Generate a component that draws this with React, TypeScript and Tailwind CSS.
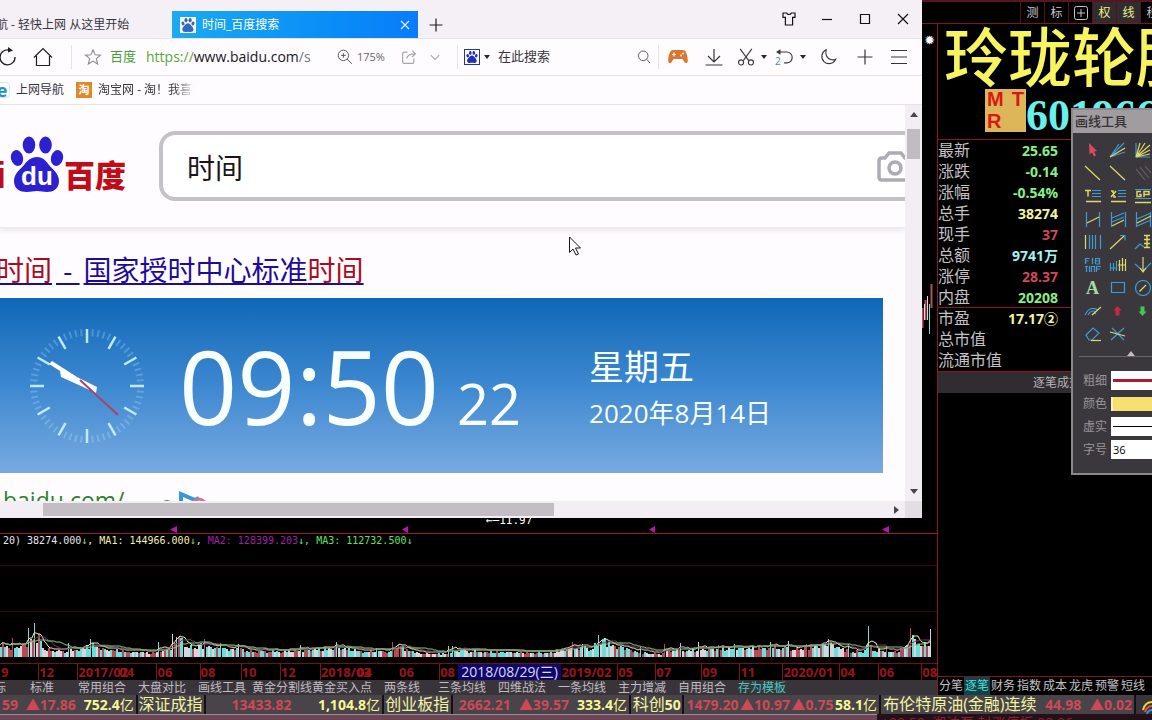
import type { ReactNode } from 'react';

const UI = "font-['Open_Sans','Noto_Sans_CJK_SC',sans-serif]";
const MONO = "font-['DejaVu_Sans_Mono','Noto_Sans_CJK_SC',monospace]";

const QUOTES = [
  { label: '最新', value: '25.65', color: 'text-[#86f086]' },
  { label: '涨跌', value: '-0.14', color: 'text-[#86f086]' },
  { label: '涨幅', value: '-0.54%', color: 'text-[#86f086]' },
  { label: '总手', value: '38274', color: 'text-[#f4f4a0]' },
  { label: '现手', value: '37', color: 'text-[#d04858]' },
  { label: '总额', value: '9741万', color: 'text-[#a0f4f4]' },
  { label: '涨停', value: '28.37', color: 'text-[#d04858]' },
  { label: '内盘', value: '20208', color: 'text-[#86f086]' },
];

const VALUATION = [
  { label: '市盈', value: '17.17②' },
  { label: '总市值', value: '' },
  { label: '流通市值', value: '' },
];

const TEMPLATES = [
  '标准', '常用组合', '大盘对比', '画线工具', '黄金分割线', '黄金买入点', '两条线',
  '三条均线', '四维战法', '一条均线', '主力增减', '自用组合',
];

const SIDE_TABS = ['分笔', '逐笔', '财务', '指数', '成本', '龙虎', '预警', '短线'];

const AXIS = [
  { label: '9', w: 38, tick: false },
  { label: '12', w: 39, tick: true },
  { label: '2017/02', w: 41, tick: true },
  { label: '04', w: 38, tick: false },
  { label: '06', w: 43, tick: true },
  { label: '08', w: 41, tick: true },
  { label: '10', w: 39, tick: true },
  { label: '12', w: 40, tick: true },
  { label: '2018/03', w: 36, tick: true },
  { label: '04', w: 42, tick: false },
  { label: '06', w: 41, tick: false },
  { label: '08', w: 123, tick: true },
  { label: '2019/02', w: 57, tick: true },
  { label: '05', w: 38, tick: true },
  { label: '07', w: 46, tick: true },
  { label: '09', w: 38, tick: true },
  { label: '11', w: 43, tick: true },
  { label: '2020/01', w: 57, tick: true },
  { label: '04', w: 39, tick: true },
  { label: '06', w: 43, tick: true },
  { label: '08', w: 15, tick: true },
];

// x position and typical height of the volume bars around it
const ENVELOPE: [number, number][] = [
  [0, 13], [12, 7], [26, 12], [33, 20], [38, 17], [44, 8], [60, 5], [72, 6], [92, 11], [105, 7],
  [125, 5], [150, 4], [170, 8], [173, 17], [182, 14], [190, 10], [205, 11], [215, 8], [240, 7],
  [260, 5], [300, 6], [330, 8], [345, 8], [365, 5], [385, 5], [398, 10], [406, 7], [420, 3],
  [445, 3], [454, 7], [468, 5], [530, 4], [550, 4], [571, 9], [590, 8], [599, 16], [615, 10],
  [640, 4], [660, 3], [672, 6], [700, 7], [740, 8], [770, 9], [790, 8], [830, 12], [850, 5],
  [864, 6], [868, 13], [873, 6], [895, 5], [905, 10], [912, 19], [920, 10], [932, 15],
];

const PEAKS: Record<number, number> = {
  12: 19, 28: 29, 34: 34, 68: 14, 90: 18, 158: 15, 172: 23, 176: 20, 182: 19, 204: 18, 220: 14,
  238: 13, 300: 12, 336: 15, 376: 9, 392: 15, 398: 12, 448: 11, 452: 11, 572: 15, 582: 13,
  598: 22, 640: 10, 664: 13, 680: 14, 698: 15, 718: 12, 734: 13, 770: 15, 788: 16, 806: 13,
  828: 18, 848: 13, 868: 31, 886: 11, 910: 29, 930: 28,
};

function heightAt(x: number) {
  const i = ENVELOPE.findIndex(([ex]) => ex >= x);
  if (i <= 0) return ENVELOPE[0][1];
  const [x0, h0] = ENVELOPE[i - 1];
  const [x1, h1] = ENVELOPE[i];
  return h0 + ((h1 - h0) * (x - x0)) / (x1 - x0);
}

const BARS = Array.from({ length: 466 }, (_, i) => {
  const x = i * 2;
  const noise = ((i * 7919 + 37 * i * i) % 101) / 101;
  const tint = (i * 31 + ((i * i) % 17) * 5 + Math.floor(i / 9) * 3) % 10;
  const fill = tint < 4 ? '#66e0dc' : tint < 7 ? '#b84a58' : '#dcd4d8';
  const h = PEAKS[x] ?? heightAt(x) * (0.75 + noise * 0.6);
  return { x, h: Math.round(h), fill };
});

function average(span: number) {
  return BARS.map((bar, i) => {
    const part = BARS.slice(Math.max(0, i - span + 1), i + 1);
    const mean = part.reduce((sum, b) => sum + b.h, 0) / part.length;
    return `${bar.x},${Math.round(108 - mean)}`;
  }).join(' ');
}

function VolumeChart() {
  return (
    <svg viewBox="0 0 937 116" preserveAspectRatio="none" className="h-[116px] w-full shrink-0" aria-hidden="true">
      <path d="M0 18.5H937M0 64.5H937" stroke="#3c0610" />
      {BARS.map((bar) => (
        <rect
          key={bar.x}
          x={bar.x}
          y={110 - bar.h}
          width={PEAKS[bar.x] ? 1 : 2}
          height={bar.h}
          fill={bar.fill}
          stroke="none"
        />
      ))}
      <polyline points={average(5)} fill="none" stroke="#f0f0b0" strokeWidth="1" />
      <polyline points={average(10)} fill="none" stroke="#8c2a7c" strokeWidth="1" />
      <polyline points={average(18)} fill="none" stroke="#78d878" strokeWidth="1" />
    </svg>
  );
}

function Paw({ className, fill }: { className: string; fill: string }) {
  return (
    <svg viewBox="0 0 54 56" className={className} fill={fill} aria-hidden="true">
      <ellipse cx="19" cy="9" rx="6.3" ry="8.6" />
      <ellipse cx="35.5" cy="9" rx="6.3" ry="8.6" />
      <ellipse cx="7" cy="22" rx="6" ry="8" transform="rotate(-14 7 22)" />
      <ellipse cx="47" cy="22" rx="6" ry="8" transform="rotate(14 47 22)" />
      <path d="M27 21c6 0 9 4 12 8s10 8 10 16-6 11-12 11c-4 0-6-1-10-1s-6 1-10 1C10 56 4 53 4 45s7-12 10-16 7-8 13-8Z" />
    </svg>
  );
}

function Icon({ children, className = 'size-5 text-[#38343c]' }: { children: ReactNode; className?: string }) {
  return (
    <svg viewBox="0 0 20 20" className={`shrink-0 ${className}`} fill="none" stroke="currentColor" strokeWidth="1.2" aria-hidden="true">
      {children}
    </svg>
  );
}

function Caret() {
  return (
    <svg viewBox="0 0 6 4" className="h-1 w-1.5 shrink-0" fill="#28242c" aria-hidden="true">
      <path d="M0 0h6L3 4Z" />
    </svg>
  );
}

function TabStrip() {
  return (
    <div className="flex h-[39px] shrink-0 items-end border-b border-[#e6e2ea] bg-[#f4f0f6] text-xs text-[#38343c]">
      <button type="button" className="flex h-[27px] w-[172px] shrink-0 items-center overflow-hidden whitespace-nowrap">
        <span className="-ml-1">航 - 轻快上网 从这里开始</span>
      </button>
      <div className="flex h-[27px] w-[246px] shrink-0 items-center bg-linear-to-r from-[#1caaf0] to-[#0a7cfa] px-2 text-white">
        <span className="flex size-4 items-center justify-center bg-white">
          <Paw className="size-3.5" fill="#3468c0" />
        </span>
        <span className="ml-1.5 flex-1">时间_百度搜索</span>
        <button type="button" aria-label="关闭标签">
          <svg viewBox="0 0 10 10" className="size-2.5" stroke="#d8f0ff" strokeWidth="1.2" aria-hidden="true">
            <path d="M1 1l8 8M9 1l-8 8" />
          </svg>
        </button>
      </div>
      <button type="button" aria-label="新标签" className="flex h-[27px] w-9 items-center justify-center text-[#201c24]">
        <Icon className="size-5">
          <path d="M10 3.5v13M3.5 10h13" />
        </Icon>
      </button>
      <div className="ml-auto flex h-[38px] items-center text-[#141018]">
        <button type="button" aria-label="皮肤" className="flex w-[38px] justify-center">
          <Icon className="size-4">
            <path d="M2.500 2.500h4.500c1 2.500 5 2.500 6 0h4.500v5.500h-3v9.500h-9v-9.500h-3Z" strokeWidth="1.5" />
          </Icon>
        </button>
        <button type="button" aria-label="最小化" className="flex w-[38px] justify-center">
          <Icon className="size-5">
            <path d="M5 10.5h10" />
          </Icon>
        </button>
        <button type="button" aria-label="最大化" className="flex w-[38px] justify-center">
          <Icon className="size-5">
            <path d="M5.5 5.5h9v9h-9Z" />
          </Icon>
        </button>
        <button type="button" aria-label="关闭" className="flex w-[38px] justify-center">
          <Icon className="size-5">
            <path d="M5 5l10 10M15 5L5 15" />
          </Icon>
        </button>
      </div>
    </div>
  );
}

function AddressBar() {
  return (
    <div className="flex h-[37px] shrink-0 items-center border-b border-[#e6e2ea] text-[#38343c]">
      <button type="button" aria-label="刷新" className="w-[33px] shrink-0">
        <Icon className="-ml-0.5 size-5 text-[#201c24]">
          <path d="M17 10a7.5 7.5 0 1 1-6-7" strokeWidth="1.4" />
          <path d="M10 0l5 3.5-5 2Z" fill="currentColor" stroke="none" />
        </Icon>
      </button>
      <button type="button" aria-label="主页" className="w-[38px] shrink-0">
        <Icon className="size-5 text-[#201c24]">
          <path d="M1 10.5L10 1.5l9 9M3.5 9v9.500h13V9" />
        </Icon>
      </button>
      <div className="flex h-6 min-w-0 flex-1 items-center border-l border-[#e6e2ea] pl-3">
        <button type="button" aria-label="收藏">
          <Icon className="size-[18px] text-[#8c8890]">
            <path d="M10 2l2.300 5.600 6 .4-4.600 3.900 1.500 5.900L10 14.600l-5.200 3.200 1.500-5.900L1.700 8l6-.4Z" />
          </Icon>
        </button>
        <span className="ml-2 shrink-0 text-[13px] text-[#48a038]">百度</span>
        <a href="https://www.baidu.com/s" className="ml-2.5 min-w-0 flex-1 truncate text-sm text-[#18141c]">
          <span className="text-[#58a838]">https://</span>www.baidu.com<span className="text-[#78747c]">/s</span>
        </a>
        <Icon className="size-4 text-[#58545c]">
          <path d="M8 1.5a6.5 6.5 0 1 1 0 13a6.5 6.5 0 0 1 0-13ZM12.5 12.5l6 6M8 5v6M5 8h6" />
        </Icon>
        <span className="ml-1 w-[30px] shrink-0 text-[11px] text-[#68646c]">175%</span>
        <button type="button" aria-label="分享" className="ml-3.5">
          <Icon className="size-4 text-[#a8a4ac]">
            <path d="M8 4H4Q2 4 2 6v10q0 2 2 2h10q2 0 2-2v-4M7 12q1-6 11-6M14 2l4 4-4 4" strokeWidth="1.5" />
          </Icon>
        </button>
        <button type="button" aria-label="更多网址" className="mr-4 ml-3">
          <Icon className="size-3 text-[#a8a4ac]">
            <path d="M3 7l7 7 7-7" strokeWidth="1.8" />
          </Icon>
        </button>
      </div>
      <div className="flex h-6 w-[201px] shrink-0 items-center border-l border-[#e6e2ea] px-1.5">
        <span className="flex size-4 shrink-0 items-center justify-center border border-[#283880]">
          <Paw className="size-3" fill="#2030b8" />
        </span>
        <span className="ml-1 shrink-0">
          <Caret />
        </span>
        <input
          type="text"
          aria-label="搜索"
          placeholder="在此搜索"
          className="ml-2 min-w-0 flex-1 bg-transparent text-[13px] placeholder:text-[#38343c] focus:outline-none"
        />
        <button type="button" aria-label="开始搜索">
          <Icon className="size-4 text-[#58545c]">
            <path d="M9 2.5a6 6 0 1 1 0 12a6 6 0 0 1 0-12ZM13.5 13l4 4.5" />
          </Icon>
        </button>
      </div>
      <div className="flex h-6 shrink-0 items-center border-l border-[#e6e2ea] pr-[3px]">
        <button type="button" aria-label="游戏" className="flex w-[37px] justify-center">
          <svg viewBox="0 0 20 16" className="h-4 w-5" aria-hidden="true">
            <path d="M5 1h10c3 0 4.500 5 4.800 10 .2 4-2.300 4-3.800 1.500L14.500 10h-9L4 12.500C2.500 15 0 15 .2 11 .5 6 2 1 5 1Z" fill="#d87830" />
            <path d="M6 3.5v4M4 5.5h4" stroke="#fff0e0" strokeWidth="1.2" />
            <circle cx="13" cy="6.5" r="1" fill="#fff0e0" />
            <circle cx="15" cy="4.5" r="1" fill="#fff0e0" />
          </svg>
        </button>
        <button type="button" aria-label="下载" className="flex w-9 justify-center">
          <Icon className="size-5">
            <path d="M10 2v13M4 9l6 6 6-6M1.5 18h17" />
          </Icon>
        </button>
        <button type="button" aria-label="截图" className="flex w-[39px] items-center justify-center gap-1.5">
          <Icon className="size-[18px]">
            <path d="M3.5 1l9.500 13M16.500 1L7 14" />
            <circle cx="4.5" cy="16" r="2.8" />
            <circle cx="15.5" cy="16" r="2.8" />
          </Icon>
          <Caret />
        </button>
        <button type="button" aria-label="撤销" className="relative flex w-[39px] items-center justify-center gap-1.5">
          <Icon className="size-[18px]">
            <path d="M2 4.5h10a6 6 0 0 1 0 12h-3" />
            <path d="M0 4.5L5 1.5v6Z" fill="currentColor" stroke="none" />
          </Icon>
          <span className="absolute top-1.5 left-1 text-[10px] text-[#4888b8]">2</span>
          <Caret />
        </button>
        <button type="button" aria-label="夜间模式" className="flex w-9 justify-center">
          <Icon className="size-[18px]">
            <path d="M8 2a8 8 0 1 0 10.500 10.500q-1.500 1-4.500 .5C8.500 12 6.500 6.500 8 2Z" />
          </Icon>
        </button>
        <button type="button" aria-label="添加" className="flex w-[37px] justify-center">
          <Icon className="size-5">
            <path d="M10 2.500v15M2.500 10h15" />
          </Icon>
        </button>
        <button type="button" aria-label="菜单" className="flex w-9 justify-center pr-1">
          <Icon className="size-5">
            <path d="M2 3.5h16M2 10h16M2 16.5h16" />
          </Icon>
        </button>
      </div>
    </div>
  );
}

function Bookmarks() {
  return (
    <nav className="flex h-[29px] shrink-0 items-center overflow-hidden border-b border-[#e6e2ea] text-xs text-[#38343c]">
      <a href="#nav" className="flex items-center gap-1.5">
        <span className="-ml-1.5 flex size-4 items-center justify-center rounded-sm border border-[#d8e8f4] text-lg leading-4 font-bold text-[#2090c8]">
          e
        </span>
        上网导航
      </a>
      <a href="#taobao" className="ml-3 flex items-center gap-1.5">
        <span className="flex size-4 items-center justify-center bg-[#e08828] text-[11px] font-bold text-white">淘</span>
        <span className="w-24 overflow-hidden mask-r-from-80% mask-r-to-100% whitespace-nowrap">淘宝网 - 淘！我喜欢</span>
      </a>
    </nav>
  );
}

function ClockFace() {
  return (
    <svg viewBox="0 0 116 116" className="size-[116px] shrink-0" aria-hidden="true">
      {Array.from({ length: 60 }, (_, i) => (
        <path
          key={i}
          d={i % 5 === 0 ? 'M58 1v14' : 'M58 1v7'}
          stroke="#c8f0ff"
          strokeWidth={i % 5 === 0 ? 2.5 : 2}
          strokeOpacity={i % 5 === 0 ? 0.95 : 0.25}
          transform={`rotate(${i * 6} 58 58)`}
        />
      ))}
      <path d="M20 36L23 33L48 49L68 59L67 65L52 58L32 49L31 43Z" fill="#fff" />
      <path d="M51 52L89 87" stroke="#a84468" strokeWidth="2" />
    </svg>
  );
}

function SearchPage() {
  return (
    <div className="min-w-0 flex-1 overflow-hidden bg-[#fefcff]">
      <div className="flex h-[123px] items-center overflow-hidden border-b border-[#eeeaf0] shadow-[0_2px_6px_#e8e4ea]">
        <div className="flex w-[159px] shrink-0 items-end pb-1 text-[#c00c18]">
          <span className="-ml-1 w-3.5 font-['Liberation_Sans'] text-[36px] leading-8 font-bold">i</span>
          <span className="relative">
            <Paw className="h-14 w-[54px]" fill="#2c20d0" />
            <span className="absolute inset-x-0 bottom-0.5 text-center font-['Liberation_Sans'] text-[26px] leading-7 font-bold text-white">
              du
            </span>
          </span>
          <span className="font-['Noto_Sans_CJK_SC',sans-serif] text-[31px] leading-9 font-black">百度</span>
        </div>
        <div className="-mr-10 flex h-[70px] min-w-0 flex-1 items-center rounded-2xl border-4 border-[#c4c2c6] bg-white pr-7 pl-6">
          <input
            type="text"
            aria-label="搜索内容"
            defaultValue="时间"
            className="min-w-0 flex-1 bg-transparent pt-1 text-[28px] leading-10 text-[#18141c] focus:outline-none"
          />
          <svg viewBox="0 0 36 32" className="h-8 w-9 shrink-0" fill="none" stroke="#aeacb2" strokeWidth="3.5" aria-hidden="true">
            <path d="M12 3h12l4 5h3q3 0 3 3v16q0 3-3 3H5q-3 0-3-3V11q0-3 3-3h3Z" />
            <circle cx="18" cy="18" r="6" />
          </svg>
        </div>
      </div>
      <a href="#time" className="mt-[22px] -ml-1 block text-[28px] leading-10 whitespace-nowrap text-[#1c0c98] underline decoration-2 underline-offset-2">
        <span className="text-[#a80c20]">时间</span>
        <span className="px-1"> - </span>国家授时中心标准<span className="text-[#a80c20]">时间</span>
      </a>
      <div className="mt-2 mr-[22px] flex h-[175px] items-center bg-linear-to-b from-[#0c68b8] via-[#3c88d0] to-[#78aae0] pl-[29px] text-[#f8ffff]">
        <ClockFace />
        <div className="flex shrink-0 items-baseline pl-[34px] font-medium">
          <span className="w-[264px] text-[102px] leading-[120px]">09:50</span>
          <span className="ml-3.5 text-[56px] leading-[60px]">22</span>
        </div>
        <div className="ml-[68px] pt-2 whitespace-nowrap">
          <p className="text-[35px] leading-[46px]">星期五</p>
          <p className="text-[26px] leading-[46px]">2020年8月14日</p>
        </div>
      </div>
      <div className="flex pt-2.5 pl-[3px] text-[23px] text-[#2c8428]">
        baidu.com/
        <svg viewBox="0 0 70 24" className="ml-4 h-6 w-[70px]" fill="none" aria-hidden="true">
          <path d="M0 19h11M23 19q4-2 8 0" stroke="#484448" strokeWidth="1.5" />
          <path d="M41 24V11l14 6 4-2" stroke="#3898d8" strokeWidth="4" />
          <path d="M53 19q6-6 12 0" stroke="#c87890" strokeWidth="3" />
        </svg>
      </div>
    </div>
  );
}

function BrowserWindow() {
  return (
    <section className="absolute top-0 right-[230px] bottom-[202px] left-0 flex flex-col overflow-hidden bg-[#fefcff]">
      <TabStrip />
      <AddressBar />
      <Bookmarks />
      <div className="flex min-h-0 flex-1">
        <SearchPage />
        <div className="flex w-[17px] shrink-0 flex-col items-center bg-[#f2eef4] pt-[7px] pb-[7px]">
          <svg viewBox="0 0 8 5" className="h-[5px] w-2" fill="#48444c" aria-hidden="true">
            <path d="M0 5L4 0l4 5Z" />
          </svg>
          <div className="mt-3 h-[30px] w-[13px] bg-[#c0bcc2]" />
          <svg viewBox="0 0 8 5" className="mt-auto h-[5px] w-2" fill="#48444c" aria-hidden="true">
            <path d="M0 0h8L4 5Z" />
          </svg>
        </div>
      </div>
      <div className="flex h-[17px] shrink-0 items-center bg-[#f2eef4]">
        <div className="ml-[43px] h-[13px] w-[511px] bg-[#c2bec4]" />
        <svg viewBox="0 0 5 8" className="mr-1.5 ml-auto h-2 w-[5px]" fill="#48444c" aria-hidden="true">
          <path d="M0 0l5 4-5 4Z" />
        </svg>
        <div className="h-full w-[17px] bg-[#e2dee4]" />
      </div>
      <svg viewBox="0 0 13 20" className="absolute top-[236px] left-[569px] h-5 w-[13px]" fill="#fff" stroke="#18141c" aria-hidden="true">
        <path d="M.5 1v15.500l3.500-3.500 3 6 2.500-1-3-6h5Z" />
      </svg>
    </section>
  );
}

const B = '#3c9cd4';
const Y = '#e0d868';

const TOOLS: { name: string; art: ReactNode }[] = [
  { name: '选择', art: <path d="M5 1l8 8-3 .5 2 4-2 1-2-4-2.500 2Z" fill="#e04860" /> },
  { name: '射线', art: (<><path d="M1 15L10 2M1 15L15 1M1 15l15-5" stroke={B} /><path d="M1 15l15-9" stroke={Y} /></>) },
  { name: '扇形', art: (<><path d="M2 1v14h14" stroke={B} /><path d="M2 15L6 1M2 15L11 1M2 15L16 3M2 15l14-7M2 15l14-3" stroke={Y} /></>) },
  { name: '线段', art: <path d="M1 1l15 14" stroke={Y} /> },
  { name: '直线', art: <path d="M1 1l15 14" stroke={Y} /> },
  { name: '平行线', art: <path d="M2 4l9 11M6 2l9 11M11 1l6 7" stroke="#5c585c" /> },
  { name: '文本线', art: (<><path d="M8 2.500h9M8 5.500h9M8 8.500h9" stroke={B} /><path d="M1 2.500h6M4 2.500v6M2 13.500h15" stroke={Y} strokeWidth="1.5" /></>) },
  { name: '百分比线', art: (<><path d="M9 2.500h8M9 5.500h8M9 8.500h8" stroke={B} /><path d="M2 9l5-6M2 3h2v2M7 9h-2v-2M2 13.500h15" stroke={Y} strokeWidth="1.5" /></>) },
  { name: 'GP', art: (<><path d="M1 1.500h16M1 10.500h16" stroke={B} /><path d="M7 3.500H3v5h4v-2H5M10 9V3.500h5v3h-5M1 14.500h16" stroke={Y} strokeWidth="1.5" /></>) },
  { name: '趋势', art: (<><path d="M2.500 1v15M15.500 1v15" stroke={B} /><path d="M3 12l12-6" stroke={Y} /></>) },
  { name: '通道', art: (<><path d="M2.500 1v15M16.500 1v15M3 7l12-5M3 11l12-5" stroke={B} /><path d="M3 15l12-6" stroke={Y} /></>) },
  { name: '回归', art: (<><path d="M2.500 1v15M16.500 1v15M3 8l14-6M3 15l14-6" stroke={B} /><path d="M3 12l14-7" stroke={Y} /></>) },
  { name: '周期', art: (<><path d="M5.500 1v14M8.500 1v14M11.500 1v14M16.500 1v14" stroke={B} /><path d="M1.500 1v14" stroke={Y} /></>) },
  { name: '箭线', art: (<><path d="M1 15L15 2" stroke={Y} /><path d="M11 1.500h5v5" stroke={B} /></>) },
  { name: '量度', art: (<><path d="M1 15l5-5 4 3" stroke={B} /><path d="M10 1.500h6M10 5.500h6M10 9.500h6M10 13.500h6M13 1v13" stroke={Y} strokeWidth="1.5" /></>) },
  {
    name: '斐波那契',
    art: (
      <path
        d="M1.500 7V1.500h4M1.500 4h3M8.500 1v6M11.500 7V1.500h4v2.500h-4M15.500 4v3h-4M1 9.500h3M2.500 9.500V15M5.500 9v6M7.500 15V9.500h3V15M12.500 15V9.500H17M12.500 12H16"
        stroke={B}
      />
    ),
  },
  { name: '密度', art: (<><path d="M1.500 6v8M4.500 6v8M7.500 4v10M1 11h7" stroke={B} /><path d="M10.500 3v11M13.500 1v13M16.500 2v12M9 8h8" stroke={Y} /></>) },
  { name: '角度', art: (<><path d="M1 7l8 7 8-8" stroke={B} /><path d="M9 0v14M6 11l3 4 3-4" stroke={Y} /></>) },
  { name: '文字', art: null },
  { name: '矩形', art: <path d="M2.500 2.500h13v10h-13Z" stroke={B} /> },
  { name: '圆', art: (<><circle cx="9" cy="8" r="7.500" stroke={B} /><path d="M6 11l6-6M5 11h2" stroke={Y} /></>) },
  { name: '弧线', art: (<><path d="M1 12Q6 2 14 7M4 12q3-6 8-3M8 12q2-3 4-1" stroke={B} /><path d="M8 12l9-8" stroke={Y} /></>) },
  { name: '上涨', art: <path d="M8.500 3l4 4.500h-2v5h-4v-5h-2Z" fill="#c82840" /> },
  { name: '下跌', art: <path d="M8.500 13l4-4.500h-2v-5h-4v5h-2Z" fill="#40c850" /> },
  { name: '擦除', art: (<><path d="M2 9l7-7 6 5-7 7H5Z" stroke={B} /><path d="M7 14.500h10" stroke={Y} /></>) },
  { name: '删除', art: (<><path d="M3 2l12 12M15 2L2 14" stroke={B} /><path d="M1 6l15 4" stroke={Y} /></>) },
];

function DrawingPalette() {
  return (
    <aside className="absolute top-[108px] -right-[37px] w-[118px] border-2 border-[#8c888c] bg-[#3b383d] text-xs text-[#98949a]">
      <h2 className="h-[23px] bg-[#a09ca0] pl-0.5 text-[13px] leading-[22px] font-medium text-[#343036]">画线工具</h2>
      <div className="grid grid-cols-[repeat(3,25px)] pt-[5px] pl-[7px]">
        {TOOLS.map((tool) => (
          <button key={tool.name} type="button" aria-label={tool.name} className="flex h-[23px] items-center justify-center">
            {tool.art ? (
              <svg viewBox="0 0 18 16" className="h-4 w-[18px]" fill="none" strokeWidth="1.2" aria-hidden="true">
                {tool.art}
              </svg>
            ) : (
              <span className="font-['Liberation_Serif'] text-lg leading-4 font-bold text-[#a8dca0]">A</span>
            )}
          </button>
        ))}
      </div>
      <div className="ml-1.5 flex h-3 items-end justify-center border-b border-[#68646a] pr-1">
        <svg viewBox="0 0 8 5" className="h-[5px] w-2" fill="#c0bcc2" aria-hidden="true">
          <path d="M0 5L4 0l4 5Z" />
        </svg>
      </div>
      <div className="mt-3.5 mb-3.5 flex flex-col gap-1 pl-2.5">
        <div className="flex h-[19px] items-center gap-1">
          <span className="w-6 shrink-0">粗细</span>
          <button type="button" aria-label="粗细" className="flex h-full flex-1 items-center bg-white pl-0.5">
            <span className="h-[3px] w-full bg-[#b01830]" />
          </button>
        </div>
        <div className="flex h-[19px] items-center gap-1">
          <span className="w-6 shrink-0">颜色</span>
          <button type="button" aria-label="颜色" className="h-3.5 flex-1 border-l-2 border-[#fcf4c8] bg-[#f6e070]" />
        </div>
        <div className="flex h-[19px] items-center gap-1">
          <span className="w-6 shrink-0">虚实</span>
          <button type="button" aria-label="虚实" className="flex h-full flex-1 items-center bg-white pl-0.5">
            <span className="h-px w-full bg-black" />
          </button>
        </div>
        <div className="flex h-[19px] items-center gap-1">
          <label htmlFor="font-size" className="w-6 shrink-0">
            字号
          </label>
          <input id="font-size" type="text" defaultValue="36" className="h-full min-w-0 flex-1 bg-white pl-0.5 text-[11px] text-black" />
        </div>
      </div>
    </aside>
  );
}

function TopBar() {
  const button = 'flex w-6 shrink-0 items-center justify-center border-l border-[#58101c]';
  return (
    <header className="flex h-6 shrink-0 justify-end border-t-2 border-b border-t-[#581420] border-b-[#7c1824] text-xs text-[#c8c4c8]">
      <div className="flex w-[132px] overflow-hidden">
        <button type="button" className={button}>测</button>
        <button type="button" className={button}>标</button>
        <button type="button" aria-label="窗口" className={button}>
          <svg viewBox="0 0 14 14" className="size-3.5" fill="none" stroke="currentColor" aria-hidden="true">
            <path d="M2.500 .5h9q2 0 2 2v9q0 2-2 2h-9q-2 0-2-2v-9q0-2 2-2ZM7 3v8M3 7h8" />
          </svg>
        </button>
        <button type="button" className={`${button} bg-[#302c30] text-[#f0f080]`}>权</button>
        <button type="button" className={`${button} bg-[#302c30] text-[#f0f080]`}>线</button>
        <button type="button" className={button}>移</button>
      </div>
    </header>
  );
}

function ChartColumn() {
  return (
    <div className="flex min-w-0 flex-1 flex-col">
      <div className="flex flex-1 justify-end">
        <div className="flex w-[15px] flex-col">
          <span className="mt-2.5 text-center text-[11px] leading-3 font-bold text-white">✹</span>
          <svg viewBox="0 0 15 60" className="mt-[232px] h-[60px] w-[15px]" aria-hidden="true">
            <path d="M.5 30v20M3.500 22v20M9.500 6v24" stroke="#b05060" strokeWidth="2" />
            <path d="M2.500 26v16M5.500 18v24" stroke="#dcd4d8" />
            <path d="M7.500 26v30" stroke="#70e0d0" />
          </svg>
        </div>
      </div>
      <p className={`h-[13px] pl-[486px] text-[11px] leading-4 text-white ${MONO}`}>←─11.97</p>
      <svg viewBox="0 0 937 7" preserveAspectRatio="none" className="h-[7px] w-full shrink-0" fill="#b018b0" aria-hidden="true">
        <path d="M170 3.5l7-3.500v7ZM402 3.5l6-3.500v7ZM649 3.5l6-3.500v7ZM882 3.5l7-3.500v7Z" />
      </svg>
      <p className={`flex h-3.5 shrink-0 items-center border-t border-[#a01828] pl-[3px] text-[10px] whitespace-pre text-[#e8e4e8] ${MONO}`}>
        <span>20) 38274.000</span>
        <span className="text-[#80e880]">↓</span>
        <span className="text-[#f0f0b0]">, MA1: 144966.000</span>
        <span className="text-[#80e880]">↓</span>
        <span>, </span>
        <span className="text-[#a020a8]">MA2: 128399.203</span>
        <span className="text-[#80e880]">↓</span>
        <span className="text-[#60e060]">, MA3: 112732.500↓</span>
      </p>
      <VolumeChart />
      <div className="relative flex h-[17px] shrink-0 overflow-hidden border-t border-[#6c121c] text-[13px] leading-4 font-bold text-[#98141c]">
        {AXIS.map((item, i) => (
          <span
            key={i}
            style={{ flexGrow: item.w }}
            className={`min-w-0 basis-0 border-l whitespace-nowrap ${item.tick ? 'border-[#7c141c]' : 'border-transparent'}`}
          >
            {item.label}
          </span>
        ))}
        <span className="absolute inset-y-0 left-[458px] w-[103px] bg-[#100868] text-center text-sm leading-4 font-medium whitespace-nowrap text-[#dcd8f8]">
          2018/08/29(三)
        </span>
      </div>
      <div className="flex h-[15px] shrink-0 overflow-hidden bg-[#38343a] text-xs leading-[15px] text-[#c0bcc2]">
        <button type="button" className="flex w-3 justify-end overflow-hidden pr-1.5">标</button>
        {TEMPLATES.map((name) => (
          <button key={name} type="button" className="w-[60px] shrink-0 whitespace-nowrap">
            {name}
          </button>
        ))}
        <button type="button" className="w-[60px] shrink-0 text-[#48c8c0]">存为模板</button>
      </div>
    </div>
  );
}

function QuotePanel() {
  return (
    <div className="flex w-[215px] shrink-0 flex-col overflow-hidden border-l border-[#8c1824]">
      <h1 className="h-[65px] pl-1.5 text-[64px] leading-[65px] font-medium whitespace-nowrap text-[#f6f460]">玲珑轮胎</h1>
      <div className="flex h-[50px] items-start pl-[47px]">
        <div className="flex h-[43px] w-[41px] shrink-0 flex-wrap justify-between bg-[#dcb658] px-0.5 font-['Liberation_Sans'] text-xl leading-5 font-bold text-[#d81818]">
          <span>M</span>
          <span>T</span>
          <span>R</span>
        </div>
        <span className="font-['Liberation_Serif'] text-[44px] leading-[54px] font-bold text-[#68f0ec]">601966</span>
      </div>
      <table className="w-full border-t border-[#8c1420] text-base leading-[21px] text-[#c4c0c4]">
        <tbody>
          {QUOTES.map((row) => (
            <tr key={row.label} className="h-[21px]">
              <th scope="row" className="w-16 text-left font-normal whitespace-nowrap">{row.label}</th>
              <td className={`pr-[94px] text-right text-sm leading-[20px] font-bold whitespace-nowrap ${row.color}`}>{row.value}</td>
            </tr>
          ))}
        </tbody>
      </table>
      <table className="-mt-px w-full border-y border-[#8c1420] text-base leading-[21px] text-[#c4c0c4]">
        <tbody>
          {VALUATION.map((row) => (
            <tr key={row.label} className="h-[21px]">
              <th scope="row" className="w-16 text-left font-normal whitespace-nowrap">{row.label}</th>
              <td className="pr-[94px] text-right text-sm leading-[20px] font-bold whitespace-nowrap text-[#f4f4a0]">{row.value}</td>
            </tr>
          ))}
        </tbody>
      </table>
      <p className="h-[21px] bg-[#302c30] pl-[95px] text-xs leading-[21px] text-[#b8b4b8]">逐笔成交</p>
      <div className="mt-auto flex h-[19px] border-t border-[#7c1420] text-xs leading-[18px] text-[#c4c0c4]">
        {SIDE_TABS.map((name) => (
          <button
            key={name}
            type="button"
            className={`w-[26px] shrink-0 whitespace-nowrap ${name === '逐笔' ? 'bg-[#104448] text-[#60d8d8]' : ''}`}
          >
            {name}
          </button>
        ))}
      </div>
    </div>
  );
}

function Cell({ grow, name, children }: { grow: number; name?: boolean; children: ReactNode }) {
  return (
    <div
      style={{ flexGrow: grow }}
      className={`flex min-w-0 basis-0 items-center border-r-2 border-[#141014] whitespace-nowrap ${
        name ? 'justify-center text-base leading-[19px] text-[#f4f4a0]' : 'justify-between px-0.5'
      }`}
    >
      {children}
    </div>
  );
}

function Ticker() {
  const volume = 'text-[#f8f890]';
  return (
    <footer className="shrink-0">
      <div className="flex h-[19px] overflow-hidden bg-[#484449] text-sm leading-[19px] font-bold text-[#d04858]">
        <Cell grow={136}>
          <span>59</span>
          <span>▲17.86</span>
          <span className={volume}>752.4<span className="font-normal">亿</span></span>
        </Cell>
        <Cell grow={68} name><span className="font-normal">深证成指</span></Cell>
        <Cell grow={178}>
          <span className="pl-6">13433.82</span>
          <span className={volume}>1,104.8<span className="font-normal">亿</span></span>
        </Cell>
        <Cell grow={69} name><span className="font-normal">创业板指</span></Cell>
        <Cell grow={178}>
          <span className="pl-1">2662.21</span>
          <span>▲39.57</span>
          <span className={volume}>333.4<span className="font-normal">亿</span></span>
        </Cell>
        <Cell grow={53} name>
          <span className="font-normal">科创</span>
          <span className="text-sm">50</span>
        </Cell>
        <Cell grow={197}>
          <span>1479.20</span>
          <span>▲10.97</span>
          <span>▲0.75</span>
          <span className={volume}>58.1<span className="font-normal">亿</span></span>
        </Cell>
        <Cell grow={257}>
          <span className="text-base leading-[19px] font-normal text-[#f4f4a0]">布伦特原油(金融)连续</span>
          <span>44.98</span>
          <span>▲0.02</span>
        </Cell>
        <div className="flex w-4 items-end justify-end bg-[#383438]">
          <svg viewBox="0 0 10 14" className="h-3.5 w-2.5" fill="none" strokeWidth="2" aria-hidden="true">
            <path d="M1 10q2-8 9-8" stroke="#f0d040" />
            <path d="M3 12q2-6 7-6" stroke="#e05838" />
            <path d="M5 14q1-4 5-4" stroke="#3890d8" />
          </svg>
        </div>
      </div>
      <div className="flex h-1.5 overflow-hidden text-sm leading-[18px] text-[#8c2030]">
        <div className="flex-1 border-t border-[#989098] bg-[#6c4654]" />
        <p className="w-[275px] shrink-0 overflow-hidden bg-[#241018] pl-1 whitespace-pre">+09:50  湘油泵 封涨停板 28.06</p>
      </div>
    </footer>
  );
}

export default function App() {
  return (
    <main className={`relative flex h-screen flex-col overflow-hidden bg-black ${UI}`}>
      <TopBar />
      <div className="flex min-h-0 flex-1">
        <ChartColumn />
        <QuotePanel />
      </div>
      <Ticker />
      <BrowserWindow />
      <DrawingPalette />
    </main>
  );
}
